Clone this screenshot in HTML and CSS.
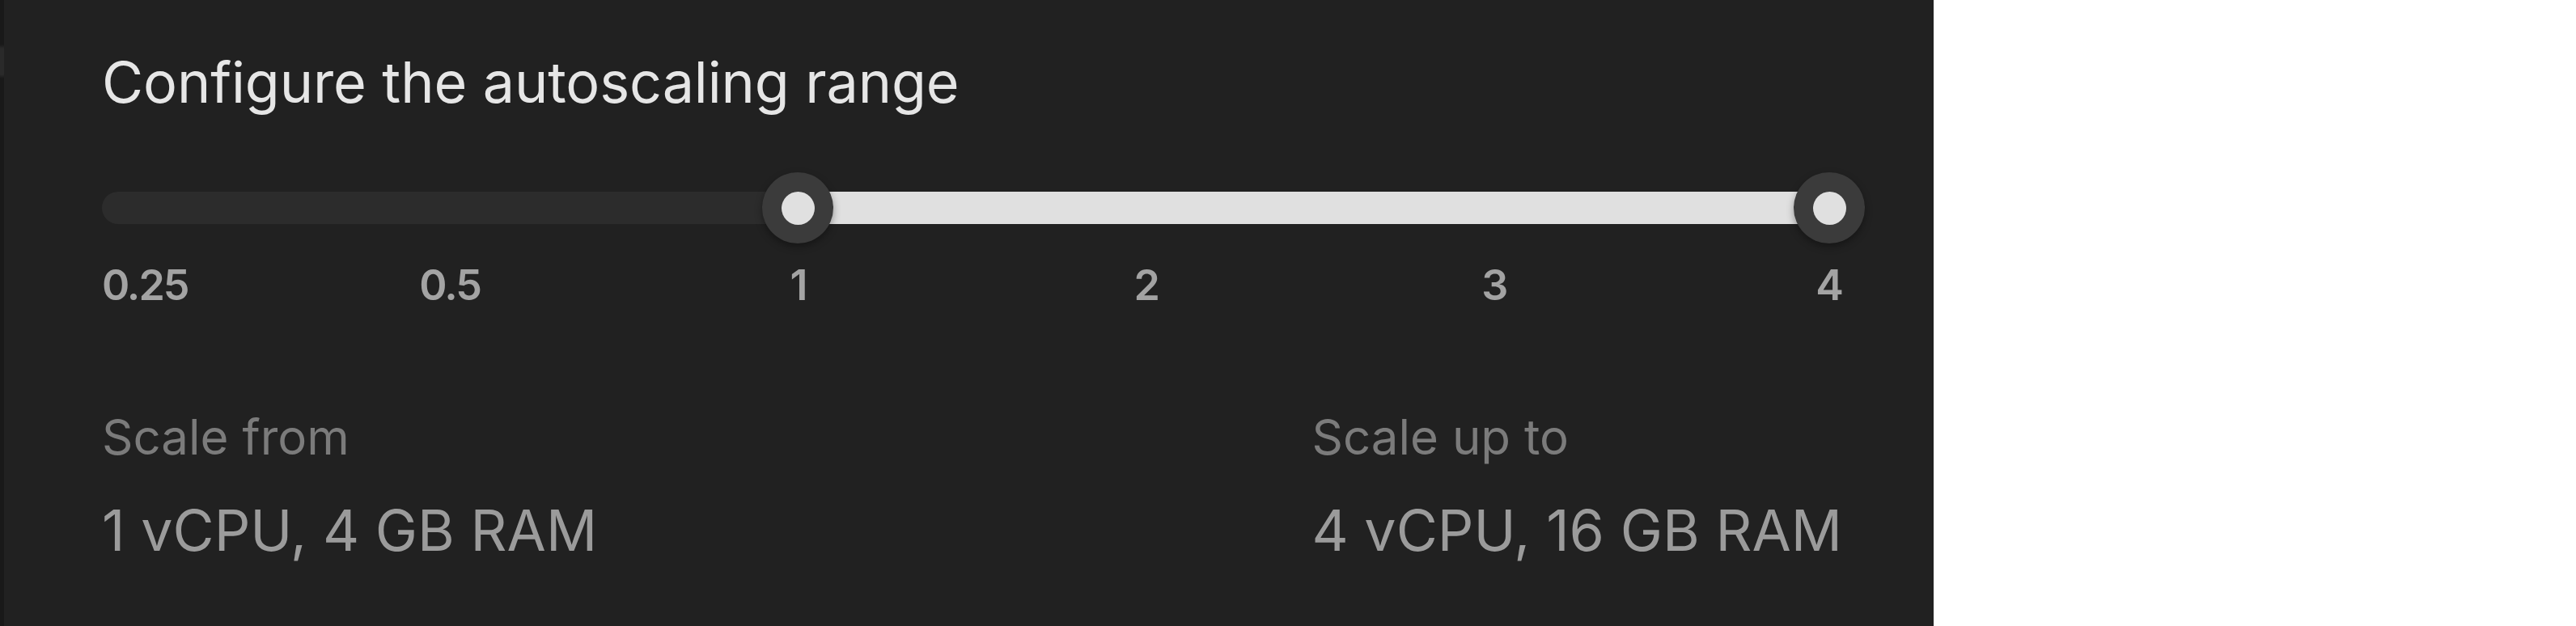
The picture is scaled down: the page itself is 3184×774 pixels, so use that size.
FILE: index.html
```html
<!DOCTYPE html>
<html lang="en">
<head>
<meta charset="utf-8">
<title>Autoscaling range</title>
<link rel="stylesheet" href="styles.css">
</head>
<body>
<div class="page">
  <div class="edge"></div>
  <section class="panel">
    <h2 class="title">Configure the autoscaling range</h2>
    <div class="slider">
      <div class="track">
        <div class="fill"></div>
      </div>
      <div class="thumb thumb-min"><span class="dot"></span></div>
      <div class="thumb thumb-max"><span class="dot"></span></div>
    </div>
    <div class="marks">
      <span class="mark mark-first" style="left:0%">0.25</span>
      <span class="mark" style="left:20%">0.5</span>
      <span class="mark" style="left:40%">1</span>
      <span class="mark" style="left:60%">2</span>
      <span class="mark" style="left:80%">3</span>
      <span class="mark mark-last" style="left:100%">4</span>
    </div>
    <div class="stats">
      <div class="stat">
        <div class="stat-label">Scale from</div>
        <div class="stat-value">1 vCPU, 4 GB RAM</div>
      </div>
      <div class="stat">
        <div class="stat-label">Scale up to</div>
        <div class="stat-value">4 vCPU, 16 GB RAM</div>
      </div>
    </div>
  </section>
</div>
</body>
</html>
```
FILE: styles.css
```css
html, body {
  margin: 0;
  padding: 0;
  background: #ffffff;
}

body {
  font-family: Inter, "Noto Sans", sans-serif;
}

.page {
  display: flex;
  width: 2390px;
  min-height: 774px;
}

.edge {
  width: 5px;
  flex: none;
  background: linear-gradient(#191919 0, #191919 55px, #2a2a2a 60px, #2a2a2a 92px, #191919 97px, #191919 100%);
}

.panel {
  flex: 1;
  background: #212121;
  padding: 59px 113px 0 121px;
  box-sizing: border-box;
}

.title {
  margin: 0;
  font-size: 70px;
  line-height: 85px;
  font-weight: 400;
  letter-spacing: -0.1px;
  color: #e6e6e6;
}

.slider {
  position: relative;
  height: 88px;
  margin-top: 69px;
  display: flex;
  align-items: center;
}

.track {
  position: relative;
  width: 100%;
  height: 40px;
  border-radius: 20px;
  background: #2c2c2c;
}

.fill {
  position: absolute;
  top: 0;
  bottom: 0;
  left: 40%;
  right: 16px;
  background: #e0e0e0;
}

.thumb {
  position: absolute;
  top: 0;
  width: 88px;
  height: 88px;
  margin-left: -44px;
  border-radius: 50%;
  background: #3b3b3b;
  box-shadow: 0 4px 10px rgba(0, 0, 0, 0.35);
  display: flex;
  align-items: center;
  justify-content: center;
}

.thumb-min {
  left: 40%;
}

.thumb-max {
  left: calc(100% - 16px);
}

.dot {
  width: 41px;
  height: 41px;
  border-radius: 50%;
  background: #e0e0e0;
}

.marks {
  position: relative;
  height: 63px;
  margin-top: 20px;
}

.mark {
  position: absolute;
  top: 0;
  font-size: 52px;
  line-height: 63px;
  font-weight: 600;
  letter-spacing: -2px;
  color: #a3a3a3;
  transform: translateX(-50%);
  white-space: nowrap;
}

.mark-first {
  transform: none;
}

.mark-last {
  transform: translateX(-100%);
}

.stats {
  display: flex;
  justify-content: space-between;
  margin-top: 120px;
}

.stat {
  display: flex;
  flex-direction: column;
}

.stat-label {
  font-size: 60px;
  line-height: 73px;
  color: #7b7b7b;
}

.stat-value {
  margin-top: 36px;
  font-size: 70px;
  line-height: 85px;
  color: #9b9b9b;
}
```
